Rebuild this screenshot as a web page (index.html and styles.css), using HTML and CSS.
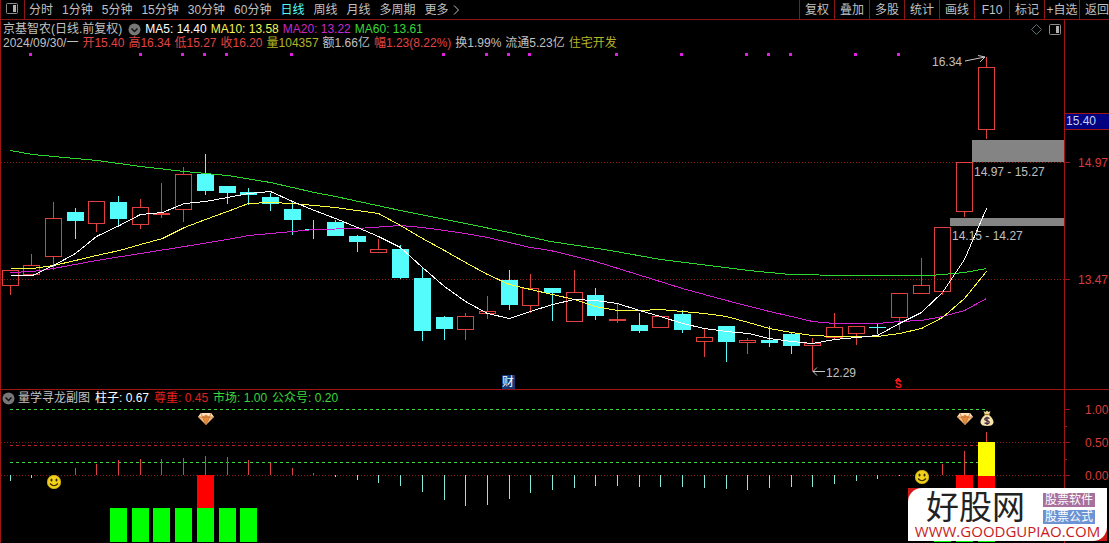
FILE: index.html
```html
<!DOCTYPE html>
<html lang="zh-CN">
<head>
<meta charset="utf-8">
<title>京基智农 日线</title>
<link rel="stylesheet" href="styles.css">
</head>
<body>
<header class="toolbar">
  <button class="layout-toggle" aria-label="布局">
    <svg width="13" height="11" viewBox="0 0 13 11"><rect x="0.5" y="0.5" width="11" height="10" rx="1" fill="none" stroke="#8c8c8c"/><rect x="7" y="2" width="3" height="7" fill="#b0b0b0"/></svg>
  </button>
  <nav class="periods">
    <button>分时</button>
    <button>1分钟</button>
    <button>5分钟</button>
    <button>15分钟</button>
    <button>30分钟</button>
    <button>60分钟</button>
    <button class="active">日线</button>
    <button>周线</button>
    <button>月线</button>
    <button>多周期</button>
    <button class="more">更多
      <svg width="6" height="10" viewBox="0 0 6 10"><path d="M1 0.5L5.5 5L1 9.5" fill="none" stroke="#c0c0c0"/></svg>
    </button>
  </nav>
  <nav class="tools">
    <button>复权</button>
    <button>叠加</button>
    <button>多股</button>
    <button>统计</button>
    <button>画线</button>
    <button>F10</button>
    <button>标记</button>
    <button>+自选</button>
    <button class="back">返回</button>
  </nav>
</header>

<main>
<section class="panel price">
  <div class="legend">
    <div class="row title-row">
      <span class="name">京基智农(日线.前复权)</span>
      <button class="drop" aria-label="指标">
        <svg width="13" height="13" viewBox="0 0 13 13"><circle cx="6.500" cy="6.500" r="6" fill="#777"/><path d="M3.500 5.500L6.500 8.500L9.500 5.500" fill="none" stroke="#111" stroke-width="1.500"/></svg>
      </button>
      <span class="white">MA5: 14.40</span>
      <span class="yellow">MA10: 13.58</span>
      <span class="magenta">MA20: 13.22</span>
      <span class="green">MA60: 13.61</span>
      <span class="corner">
        <svg width="11" height="11" viewBox="0 0 11 11"><path d="M5.500 0.500L10.500 5.500L5.500 10.500L0.500 5.500Z" fill="none" stroke="#5c6c70"/></svg>
        <svg width="12" height="11" viewBox="0 0 12 11"><rect x="0.500" y="0.500" width="11" height="10" rx="1" fill="none" stroke="#8c8c8c"/><rect x="7" y="2" width="3" height="7" fill="#b0b0b0"/></svg>
      </span>
    </div>
    <div class="row">
      <span>2024/09/30/一</span>
      <span class="up">开15.40</span>
      <span class="up">高16.34</span>
      <span class="up">低15.27</span>
      <span class="up">收16.20</span>
      <span class="olive">量104357</span>
      <span>额1.66亿</span>
      <span class="up">幅1.23(8.22%)</span>
      <span>换1.99%</span>
      <span>流通5.23亿</span>
      <span class="olive">住宅开发</span>
    </div>
  </div>
  <svg class="chart" viewBox="1 50 1108 339">
    <path class="dotted" d="M1 162.500H1064M1 279.500H1064"/>
    <path class="frame" d="M1064.500 50V389M1064 162.500H1070M1064 279.500H1070"/>
    <path class="signal" d="M29 54.500h3M139 54.500h3M181 54.500h3M203 54.500h3M225 54.500h3M290 54.500h3M442 54.500h3M485 54.500h3M507 54.500h3M528 54.500h3M615 54.500h3M680 54.500h3M745 54.500h3M767 54.500h3M789 54.500h3M854 54.500h3M897 54.500h3"/>
    <path class="gap" d="M972 140H1064V162H972ZM950 218H1064V226H950Z"/>
    <path class="rise" d="M2.500 270.500h16v15h-16zM10.500 286V295M23.500 265.500h16v9h-16zM31.500 254V265M45.500 218.500h16v38h-16zM53.500 202V218M53.500 257V270M88.500 201.500h16v22h-16zM96.500 224V232M132.500 207.500h16v17h-16zM140.500 199V207M140.500 225V229M153.500 213.500h16v1h-16zM161.500 183V218M175.500 174.500h16v35h-16zM183.500 167V174M183.500 210V222M370.500 249.500h16v3h-16zM378.500 239V249M457.500 316.500h16v13h-16zM465.500 313V316M465.500 330V340M479.500 311.500h16v2h-16zM487.500 296V311M487.500 314V319M522.500 288.500h16v17h-16zM530.500 274V288M530.500 306V313M566.500 292.500h16v29h-16zM574.500 270V292M609.500 319.500h16v1h-16zM617.500 303V323M652.500 316.500h16v11h-16zM696.500 337.500h16v4h-16zM704.500 328V337M704.500 342V357M739.500 340.500h16v2h-16zM747.500 338V340M747.500 343V354M804.500 343.500h16v2h-16zM812.500 338V343M812.500 346V371M826.500 327.500h16v10h-16zM834.500 313V327M834.500 338V340M848.500 326.500h16v7h-16zM856.500 334V345M891.500 293.500h16v24h-16zM899.500 318V330M913.500 285.500h16v8h-16zM921.500 258V285M934.500 227.500h16v64h-16zM942.500 292V295M956.500 162.500h16v49h-16zM964.500 212V217M978.500 67.500h16v62h-16zM986.500 57V67M986.500 130V139"/>
    <path class="fall" d="M67 212h17v9h-17zM110 202h17v17h-17zM197 174h17v17h-17zM219 186h17v7h-17zM240 192h17v3h-17zM262 197h17v7h-17zM284 209h17v11h-17zM305 229h17v1h-17zM327 222h17v14h-17zM349 236h17v6h-17zM392 249h17v29h-17zM414 278h17v53h-17zM436 317h17v12h-17zM501 280h17v25h-17zM544 288h17v5h-17zM587 295h17v21h-17zM631 325h17v6h-17zM674 314h17v16h-17zM718 326h17v16h-17zM761 340h17v3h-17zM783 334h17v12h-17zM869 327h17v1h-17z"/>
    <path class="fall-wick" d="M75.500 208V239M118.500 196V225M205.500 154V195M227.500 186V204M248.500 188V205M270.500 193V211M292.500 201V235M313.500 220V239M335.500 220V236M357.500 235V252M400.500 245V279M422.500 267V341M444.500 316V340M509.500 270V310M552.500 288V321M595.500 288V320M639.500 313V333M682.500 310V333M726.500 326V362M769.500 326V347M791.500 333V354M877.500 323V334"/>
    <g class="averages" transform="translate(0.5 0.5)">
      <path class="ma60" d="M10 150L32 154L75 158L97 160L140 166L184 171L227 175L270 182L314 192L335 196L400 210L465 223L509 232L550 241L610 250L660 259L700 264L748 270L790 274L847 275L930 275L942 274L964 272L986 268"/>
      <path class="ma20" d="M10 272L32 271L53 268L96 260L140 253L184 246L227 239L248 235L270 233L314 229L357 228L400 225L422 227L444 230L465 233L487 237L530 247L550 250L595 261L650 278L682 288L726 300L769 311L791 316L812 321L834 323L877 323L899 321L921 320L942 316L964 310L986 298"/>
      <path class="ma10" d="M10 268L32 268L53 265L75 260L96 255L119 250L140 244L162 238L184 227L205 219L227 211L248 203L270 202L292 203L314 205L335 207L378 213L400 225L422 238L444 250L465 262L487 274L509 284L530 289L552 294L574 299L595 306L617 310L639 310L660 309L682 311L704 313L726 316L748 322L769 328L791 332L812 335L834 336L856 336L877 336L899 333L921 328L942 317L964 298L986 271"/>
      <path class="ma5" d="M10 275L32 275L53 265L75 253L96 236L119 225L140 214L162 212L184 203L205 201L227 197L248 193L270 191L292 201L314 210L335 218L357 227L378 236L400 247L422 267L444 286L465 301L487 313L509 318L530 311L552 304L574 299L595 300L617 303L639 310L660 316L682 323L704 328L726 331L748 333L769 338L791 341L812 343L834 339L856 337L877 335L899 323L921 312L942 292L964 259L986 208"/>
    </g>
    <path class="arrow" d="M965 61L985 57M978 55.500L985 57L980 62M825 371.500H813M817 367.500L813 371.500L817 375.500"/>
    <text class="note" x="932" y="66">16.34</text>
    <text class="note" x="826" y="377">12.29</text>
    <text class="note" x="974" y="176">14.97 - 15.27</text>
    <text class="note" x="952" y="240">14.15 - 14.27</text>
    <rect x="1065" y="113" width="44" height="17" fill="#000080"/>
    <path class="frame" d="M1065 113.500H1109M1065 129.500H1109"/>
    <text class="current" x="1066" y="125">15.40</text>
    <text class="scale" x="1078" y="167">14.97</text>
    <text class="scale" x="1078" y="284">13.47</text>
    <rect x="502" y="375" width="13" height="14" fill="#123a78"/>
    <text class="badge" x="502" y="386">财</text>
    <text class="dollar" x="895" y="388">S</text>
    <path d="M895 380.500L898 377.500L901 380.500Z" fill="#f01818"/>
  </svg>
</section>

<section class="panel indicator">
  <div class="legend">
    <div class="row">
      <button class="drop" aria-label="副图指标">
        <svg width="13" height="13" viewBox="0 0 13 13"><circle cx="6.500" cy="6.500" r="6" fill="#777"/><path d="M3.500 5.500L6.500 8.500L9.500 5.500" fill="none" stroke="#111" stroke-width="1.500"/></svg>
      </button>
      <span>量学寻龙副图</span>
      <span class="white">柱子: 0.67</span>
      <span class="red">尊重: 0.45</span>
      <span class="green">市场: 1.00</span>
      <span class="green">公众号: 0.20</span>
    </div>
  </div>
  <svg class="chart" viewBox="1 405 1108 138">
    <defs>
      <g id="smile">
        <circle r="7" fill="#f2d21c"/>
        <circle r="6.500" fill="none" stroke="#b8960c" stroke-opacity="0.5"/>
        <ellipse cx="-2.500" cy="-2" rx="1" ry="1.500" fill="#3a2800"/>
        <ellipse cx="2.500" cy="-2" rx="1" ry="1.500" fill="#3a2800"/>
        <path d="M-4 1.500Q0 6 4 1.500" fill="none" stroke="#3a2800" stroke-width="1.200"/>
      </g>
      <g id="gem">
        <path d="M-5 -6H5L8 -2L0 6L-8 -2Z" fill="#f5b878"/>
        <path d="M-5 -6H5L8 -2H-8Z" fill="#ffe2bd"/>
        <path d="M-3.500 -2L0 -4.500L3.500 -2L0 5Z" fill="#e48a3c"/>
        <path d="M-8 -2H8M-5 -6L-3.500 -2L0 6L3.500 -2L5 -6" fill="none" stroke="#b8682c" stroke-width="0.700"/>
      </g>
    </defs>
    <path class="dotted" d="M1 442.500H1064M1 475.500H1064"/>
    <path class="level-green" d="M10 409.500H986M10 462.500H986"/>
    <path class="level-red" d="M10 445.500H986"/>
    <path class="frame" d="M1064.500 405V543M1064 409.500H1070M1064 426.500H1067M1064 442.500H1070M1064 459.500H1067M1064 475.500H1070"/>
    <path class="rise" d="M75.500 468V475M96.500 464V475M118.500 460V475M140.500 459V475M161.500 459V475M183.500 458V475M205.500 456V475M227.500 457V475M248.500 460V475M270.500 463V475M292.500 468V475M313.500 473V475M942.500 464V475M964.500 451V475M986.500 432V442"/>
    <path class="fall-stem" d="M10.500 475V481M31.500 475V478M335.500 475V477M357.500 475V480M378.500 475V483M400.500 475V486M422.500 475V492M444.500 475V500M465.500 475V506M487.500 475V505M509.500 475V499M530.500 475V493M552.500 475V490M574.500 475V488M595.500 475V486M617.500 475V486M639.500 475V487M660.500 475V487M682.500 475V487M704.500 475V488M726.500 475V489M747.500 475V490M769.500 475V488M791.500 475V487M812.500 475V487M834.500 475V484M856.500 475V481M877.500 475V479M899.500 475V476"/>
    <path fill="#f00" d="M197 475h17v33h-17zM956 475h17v33h-17zM978 476h17v32h-17z"/>
    <path fill="#ff0" d="M978 442h17v34h-17z"/>
    <path fill="#0f0" d="M110 508h17v34h-17zM132 508h17v34h-17zM153 508h17v34h-17zM175 508h17v34h-17zM197 508h17v34h-17zM219 508h17v34h-17zM240 508h17v34h-17zM934 508h17v34h-17zM956 508h17v34h-17zM978 508h17v34h-17z"/>
    <use href="#smile" x="54" y="482"/>
    <use href="#smile" x="922" y="477"/>
    <use href="#gem" x="206" y="419"/>
    <use href="#gem" x="965" y="419"/>
    <g>
      <path d="M983.500 411L985.500 412L987 410.500L988.500 412L990.500 411L989 415H985Z" fill="#f0dc98"/>
      <path d="M985 415H989Q993.500 418.500 993.500 422.500Q993 426 987 426Q981 426 980.500 422.500Q980.500 418.500 985 415Z" fill="#f6e4a8"/>
      <path d="M984.500 414.500H989.500" stroke="#a87c20" stroke-width="1.200"/>
      <path d="M989.500 418.500Q987 417 985 418.500Q984 420 987 420.500Q990 421.500 989 423Q987 424.500 984.500 422.800M987 416.800V425" fill="none" stroke="#4c3048" stroke-width="1.300"/>
    </g>
    <text class="scale" x="1085" y="414">1.00</text>
    <text class="scale" x="1085" y="447">0.50</text>
    <text class="scale" x="1085" y="480">0.00</text>
  </svg>
  <aside class="watermark">
    <div class="brand">
      <div class="brand-top">
        <span class="brand-name">好股网</span>
        <span class="tags"><span class="tag plum">股票软件</span><span class="tag blue">股票公式</span></span>
      </div>
      <a class="site" href="#">WWW.GOODGUPIAO.COM</a>
    </div>
  </aside>
</section>
</main>
</body>
</html>
```
FILE: styles.css
```css
* { box-sizing: border-box; }

body {
  margin: 0;
  background: #000;
  color: #c0c0c0;
  font: 12px/14px "Liberation Sans", "Noto Sans CJK SC", sans-serif;
}

button {
  padding: 0;
  border: 0;
  background: none;
  color: inherit;
  font: inherit;
  white-space: nowrap;
}

button svg { display: block; }

.toolbar {
  display: flex;
  height: 20px;
  border-bottom: 1px solid #8c1616;
  border-left: 1px solid #8c1616;
  overflow: hidden;
}

.layout-toggle {
  display: flex;
  align-items: center;
  width: 24px;
  padding: 0 0 2px 5px;
  border-right: 1px solid #8c1616;
}

.periods {
  display: flex;
  gap: 9px;
  padding-left: 4px;
}

.periods .active { color: #54fcfc; }

.periods .more {
  display: flex;
  align-items: center;
  gap: 4px;
}

.tools {
  display: flex;
  margin-left: auto;
}

.tools button {
  width: 35px;
  border-left: 1px solid #8c1616;
}

.tools .back {
  width: 30px;
  text-align: right;
}

.panel {
  position: relative;
  border-left: 1px solid #a01414;
}

.price { border-bottom: 1px solid #a01414; }

.legend {
  margin-right: 44px;
  border-right: 1px solid #a01414;
}

.price .legend { padding: 2px 0 0 2px; }
.indicator .legend { padding: 0 0 1px 1px; }

.row {
  display: flex;
  align-items: center;
  gap: 4px;
  height: 14px;
  white-space: nowrap;
}

.drop { flex: none; }
.name { margin-right: 2px; }
.indicator .row { gap: 5px; padding-top: 2px; }
.indicator .drop { margin-right: -2px; }

.corner {
  display: flex;
  gap: 7px;
  margin-left: auto;
  padding-right: 3px;
}

.white { color: #fff; }
.yellow { color: #f4f454; }
.magenta { color: #c828c8; }
.green { color: #38d838; }
.up { color: #e04444; }
.olive { color: #b4b428; }
.red { color: #e02020; }

.chart {
  display: block;
  width: 100%;
  height: auto;
  shape-rendering: crispEdges;
}

.chart g, .chart .arrow { shape-rendering: auto; }
.chart .averages { fill: none; shape-rendering: crispEdges; }

.frame { fill: none; stroke: #a01414; }
.dotted { fill: none; stroke: #8c1818; stroke-dasharray: 1 2; }
.signal { stroke: #e020e0; stroke-width: 3; }
.gap { fill: #848484; }
.rise { fill: none; stroke: #e04040; }
.fall { fill: #54fcfc; }
.fall-wick { fill: none; stroke: #54fcfc; }
.fall-stem { fill: none; stroke: #88e8dc; }
.ma60 { stroke: #2cd82c; }
.ma20 { stroke: #d020d0; }
.ma10 { stroke: #fcfc40; }
.ma5 { stroke: #fff; }
.arrow { fill: none; stroke: #c8c8c8; }
.level-green { stroke: #40d840; stroke-dasharray: 3 3; }
.level-red { stroke: #b82030; stroke-dasharray: 3 3; }

.note { fill: #c0c0c0; }
.current { fill: #c8d0f0; }
.scale { fill: #d83c3c; }
.badge { fill: #fff; }
.dollar { fill: #f01818; font-size: 10px; font-weight: bold; }

.watermark {
  position: absolute;
  right: 2px;
  bottom: 2px;
  background: #d01818;
}

.brand {
  width: 199px;
  padding: 3px 6px 2px 6px;
  border-radius: 14px 0 14px 0;
  background: #fff;
}

.brand-top {
  display: flex;
  justify-content: space-between;
  padding: 0 6px 0 12px;
}

.brand-name {
  color: #222;
  font-size: 33px;
  line-height: 33px;
}

.tags {
  display: grid;
  gap: 3px;
  align-content: start;
  padding-top: 2px;
}

.tag {
  padding: 0 2px;
  color: #fff;
}

.plum { background: #a8709c; }
.blue { background: #6c94d4; }

.site {
  display: block;
  color: #c81c1c;
  font: 15px/15px "Open Sans", "Noto Sans", sans-serif;
  text-align: center;
  text-decoration: none;
}
```
